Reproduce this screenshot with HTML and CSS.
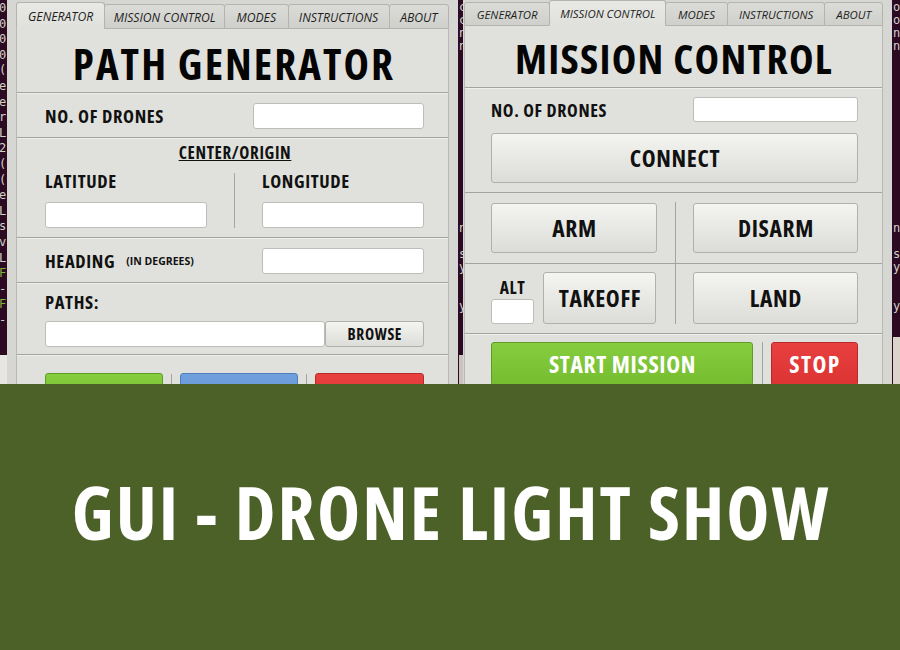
FILE: index.html
```html
<!DOCTYPE html>
<html lang="en">
<head>
<meta charset="utf-8">
<title>GUI - Drone Light Show</title>
<link rel="stylesheet" href="styles.css">
</head>
<body>
<div class="desktop">
  <div class="term term-left">0
0
0
0
(
e
e
r
L
2
(
(
e
L
s
v
L
<span class="g">F</span>
-
<span class="g">F</span>
-</div>
  <div class="term term-mid">c
c
n
n













n

s
y


y</div>
  <div class="term term-right">o
o
n
n













n

s
y


y</div>
  <div class="patch patch-left"></div>
  <div class="patch patch-mid"></div>
  <div class="patch patch-right"></div>

  <div class="window win-gen">
    <div class="tabs">
      <div class="tab t1 active">GENERATOR</div>
      <div class="tab t2">MISSION CONTROL</div>
      <div class="tab t3">MODES</div>
      <div class="tab t4">INSTRUCTIONS</div>
      <div class="tab t5">ABOUT</div>
    </div>
    <div class="panel">
      <div class="sec gen-title"><h1 class="title">PATH GENERATOR</h1></div>
      <div class="sec gen-drones">
        <span class="label">NO. OF DRONES</span>
        <input class="field f-drones" type="text">
      </div>
      <div class="sec gen-center">
        <div class="sub-title">CENTER/ORIGIN</div>
        <div class="coords">
          <div class="coord"><span class="label">LATITUDE</span><input class="field f-coord" type="text"></div>
          <div class="vdiv"></div>
          <div class="coord"><span class="label">LONGITUDE</span><input class="field f-coord" type="text"></div>
        </div>
      </div>
      <div class="sec gen-heading">
        <span class="label">HEADING</span><span class="note">(IN DEGREES)</span>
        <input class="field f-heading" type="text">
      </div>
      <div class="sec gen-paths">
        <span class="label">PATHS:</span>
        <div class="path-row"><input class="field f-path" type="text"><div class="btn btn-browse">BROWSE</div></div>
      </div>
      <div class="sec gen-actions">
        <div class="btn btn-green b-g1"></div>
        <div class="sep"></div>
        <div class="btn btn-blue b-g2"></div>
        <div class="sep"></div>
        <div class="btn btn-red b-g3"></div>
      </div>
    </div>
  </div>

  <div class="window win-mis">
    <div class="tabs">
      <div class="tab t1">GENERATOR</div>
      <div class="tab t2 active">MISSION CONTROL</div>
      <div class="tab t3">MODES</div>
      <div class="tab t4">INSTRUCTIONS</div>
      <div class="tab t5">ABOUT</div>
    </div>
    <div class="panel">
      <div class="sec mis-title"><h1 class="title">MISSION CONTROL</h1></div>
      <div class="sec mis-connect">
        <div class="drone-row"><span class="label">NO. OF DRONES</span><input class="field f-drones2" type="text"></div>
        <div class="btn big btn-connect">CONNECT</div>
      </div>
      <div class="sec mis-grid">
        <div class="cell c-arm"><div class="btn big b-arm">ARM</div></div>
        <div class="mis-vdiv"></div>
        <div class="cell c-disarm"><div class="btn big b-right">DISARM</div></div>
        <div class="mis-hline"></div>
        <div class="cell c-take">
          <div class="alt"><span class="label alt-label">ALT</span><input class="field f-alt" type="text"></div>
          <div class="btn big b-take">TAKEOFF</div>
        </div>
        <div class="cell c-land"><div class="btn big b-right b-land">LAND</div></div>
      </div>
      <div class="sec mis-start">
        <div class="btn big btn-green b-start">START MISSION</div>
        <div class="sep sep-start"></div>
        <div class="btn big btn-red b-stop">STOP</div>
      </div>
    </div>
  </div>
</div>
<div class="banner">GUI - DRONE LIGHT SHOW</div>
</body>
</html>
```

FILE: styles.css
```css
* { box-sizing: border-box; margin: 0; padding: 0; }

body {
  width: 900px;
  height: 650px;
  overflow: hidden;
  background: #2c0a22;
  font-family: "Open Sans", "Liberation Sans", sans-serif;
  font-stretch: 75%;
  letter-spacing: 0.04em;
  color: #111;
}

.desktop {
  position: relative;
  height: 384px;
  overflow: hidden;
  background: #2c0a22;
}

/* terminal text peeking between the windows */
.term {
  position: absolute;
  top: 1px;
  font-family: "DejaVu Sans Mono", monospace;
  font-stretch: normal;
  letter-spacing: 0;
  font-size: 12px;
  line-height: 13px;
  color: #cfd2cb;
  white-space: pre;
}
.term-left { left: -1px; line-height: 15.6px; }
.term-mid { left: 459px; }
.term-right { left: 893px; }
.g { color: #7fb33a; }

.patch { position: absolute; }
.patch-left { left: 0; top: 355px; width: 7px; height: 29px; background: #e8e6e3; }
.patch-mid { left: 459px; top: 355px; width: 4px; height: 29px; background: #cbc4bc; }
.patch-right { left: 893px; top: 337px; width: 7px; height: 47px; background: #dbd4ca; }

/* windows */
.window {
  position: absolute;
  top: 0;
  height: 384px;
  background: #d6d7d2;
  display: flex;
  flex-direction: column;
}
.win-gen { left: 7px; width: 451px; padding: 0 9px; }
.win-mis { left: 463px; width: 429px; padding: 0 9px 0 1px; }

.tabs { display: flex; align-items: flex-end; flex: none; }
.win-gen .tabs { height: 29px; }
.win-mis .tabs { height: 26px; }

.tab {
  flex-basis: 0;
  height: 25px;
  margin-left: -1px;
  border: 1px solid #b3b4af;
  border-radius: 3px 3px 0 0;
  background: linear-gradient(#dbdcd7, #cfd0cb);
  display: flex;
  align-items: center;
  justify-content: center;
  font-style: italic;
  font-stretch: 100%;
  letter-spacing: 0;
  color: #1e1e1e;
  white-space: nowrap;
}
.tab:first-child { margin-left: 0; }
.win-gen .tab { font-size: 12.2px; height: 25px; padding-top: 1px; }
.win-mis .tab { font-size: 11.4px; height: 24px; }
.tab.active {
  background: linear-gradient(#e8e9e4, #e0e1dc);
  border-bottom-color: #e0e1dc;
}
.win-gen .tab.active { height: 27px; }
.win-mis .tab.active { height: 26px; }
.t1 { flex-grow: 88; }
.t2 { flex-grow: 120; }
.t3 { flex-grow: 63; }
.t4 { flex-grow: 101; }
.t5 { flex-grow: 59; }

.panel {
  flex: 1;
  background: #e0e1dc;
  border-left: 1px solid #b8b9b4;
  border-right: 1px solid #b8b9b4;
  display: flex;
  flex-direction: column;
  overflow: hidden;
}

.sec {
  flex: none;
  border-top: 1px solid #a3a49f;
  box-shadow: inset 0 1px 0 #eeeeea;
}
.sec:first-child { border-top: 0; box-shadow: none; }

.title {
  font-weight: 700;
  color: #050505;
  white-space: nowrap;
}

.label {
  font-weight: 700;
  font-size: 18.5px;
  line-height: 20px;
  color: #111;
  white-space: nowrap;
}

.field {
  display: block;
  background: #fff;
  border: 1px solid #bdbeb9;
  border-radius: 3px;
  outline: none;
}

.btn {
  display: flex;
  align-items: center;
  justify-content: center;
  border: 1px solid #b0b1ac;
  border-radius: 3px;
  background: linear-gradient(#f4f4f1, #dcddd8);
  font-weight: 700;
  color: #111;
  white-space: nowrap;
  padding-left: 0.04em;
}
.btn.big { font-size: 23.5px; }
.btn-green {
  background: linear-gradient(#86cd3f, #76bc30);
  border-color: #5f9c27;
  color: #fff;
}
.btn-blue {
  background: linear-gradient(#70a0dc, #6494d3);
  border-color: #4f7fbe;
}
.btn-red {
  background: linear-gradient(#e8403f, #dc3333);
  border-color: #b9292a;
  color: #fff;
}
.sep { width: 1px; background: #a3a49f; height: 30px; }

/* ---------- path generator ---------- */
.gen-title {
  height: 63px;
  display: flex;
  justify-content: center;
  align-items: center;
  padding: 5px 0 0 3px;
}
.win-gen .title { font-size: 43px; line-height: 43px; letter-spacing: 0.048em; }

.gen-drones {
  height: 45px;
  display: flex;
  align-items: center;
  justify-content: space-between;
  padding: 2px 24px 0 28px;
}
.f-drones { width: 171px; height: 26px; }

.gen-center { height: 100px; padding-top: 5px; }
.sub-title {
  font-size: 17px;
  line-height: 20px;
  font-weight: 700;
  text-decoration: underline;
  text-align: center;
  padding-left: 5px;
}
.coords {
  display: grid;
  grid-template-columns: 162px 1px 162px;
  column-gap: 27px;
  margin: 8px 0 0 28px;
}
.coord { display: flex; flex-direction: column; }
.f-coord { width: 162px; height: 26px; margin-top: 11px; }
.vdiv { background: #a6a7a2; margin-top: 2px; }

.gen-heading {
  height: 45px;
  display: flex;
  align-items: center;
  padding: 1px 24px 0 28px;
}
.note { font-size: 10.5px; font-stretch: 100%; letter-spacing: 0; font-weight: 700; margin-left: 11px; }
.f-heading { margin-left: auto; width: 162px; height: 26px; }

.gen-paths { height: 72px; padding: 9px 24px 0 28px; }
.path-row { display: flex; margin-top: 7px; }
.f-path { width: 280px; height: 26px; }
.btn-browse { width: 99px; height: 26px; font-size: 15.5px; }

.gen-actions {
  flex: 1;
  display: flex;
  align-items: flex-start;
  gap: 8px;
  padding: 18px 0 0 28px;
}
.gen-actions .sep { margin-top: 1px; }
.b-g1, .b-g2 { width: 118px; height: 36px; }
.b-g3 { width: 109px; height: 36px; }

/* ---------- mission control ---------- */
.mis-title {
  height: 61px;
  display: flex;
  justify-content: center;
  align-items: center;
  padding: 4px 0 0 1px;
}
.win-mis .title { font-size: 41.5px; line-height: 43px; letter-spacing: 0.03em; }

.mis-connect { height: 105px; padding: 9px 24px 0 26px; }
.drone-row {
  display: flex;
  align-items: center;
  justify-content: space-between;
  height: 25px;
}
.drone-row .label { font-size: 18px; }
.f-drones2 { width: 165px; height: 25px; }
.btn-connect { height: 50px; margin-top: 11px; }

.mis-grid {
  display: grid;
  grid-template-columns: 210px 1px 1fr;
  grid-template-rows: 70px 1px 69px;
  box-shadow: none;
}
.cell { display: flex; align-items: flex-start; }
.c-arm { grid-area: 1 / 1; padding: 10px 0 0 26px; }
.c-disarm { grid-area: 1 / 3; padding: 10px 0 0 17px; }
.c-take { grid-area: 3 / 1; padding: 8px 0 0 26px; gap: 9px; }
.c-land { grid-area: 3 / 3; padding: 8px 0 0 17px; }
.mis-vdiv {
  grid-column: 2;
  grid-row: 1 / 4;
  background: #a3a49f;
  margin: 9px 0 9px;
}
.mis-hline { grid-column: 1 / 4; grid-row: 2; background: #a3a49f; }

.b-arm { width: 166px; height: 50px; }
.b-right { width: 165px; height: 50px; }
.b-land { height: 52px; }
.b-take { width: 113px; height: 52px; }
.alt { display: flex; flex-direction: column; align-items: center; width: 43px; padding-top: 5px; }
.alt-label { font-size: 17.5px; }
.f-alt { width: 43px; height: 25px; margin-top: 2px; }

.mis-start {
  flex: 1;
  display: flex;
  align-items: flex-start;
  padding: 8px 0 0 26px;
}
.b-start { width: 262px; height: 44px; }
.sep-start { margin: 0 8px 0 9px; height: 44px; }
.b-stop { width: 87px; height: 44px; letter-spacing: 0.06em; }

/* ---------- banner ---------- */
.banner {
  height: 266px;
  background: #4b6128;
  color: #fff;
  display: flex;
  align-items: center;
  justify-content: center;
  font-size: 73px;
  line-height: 73px;
  font-weight: 700;
  letter-spacing: 0.028em;
  padding: 0 0 12px 2px;
  white-space: nowrap;
}
```
